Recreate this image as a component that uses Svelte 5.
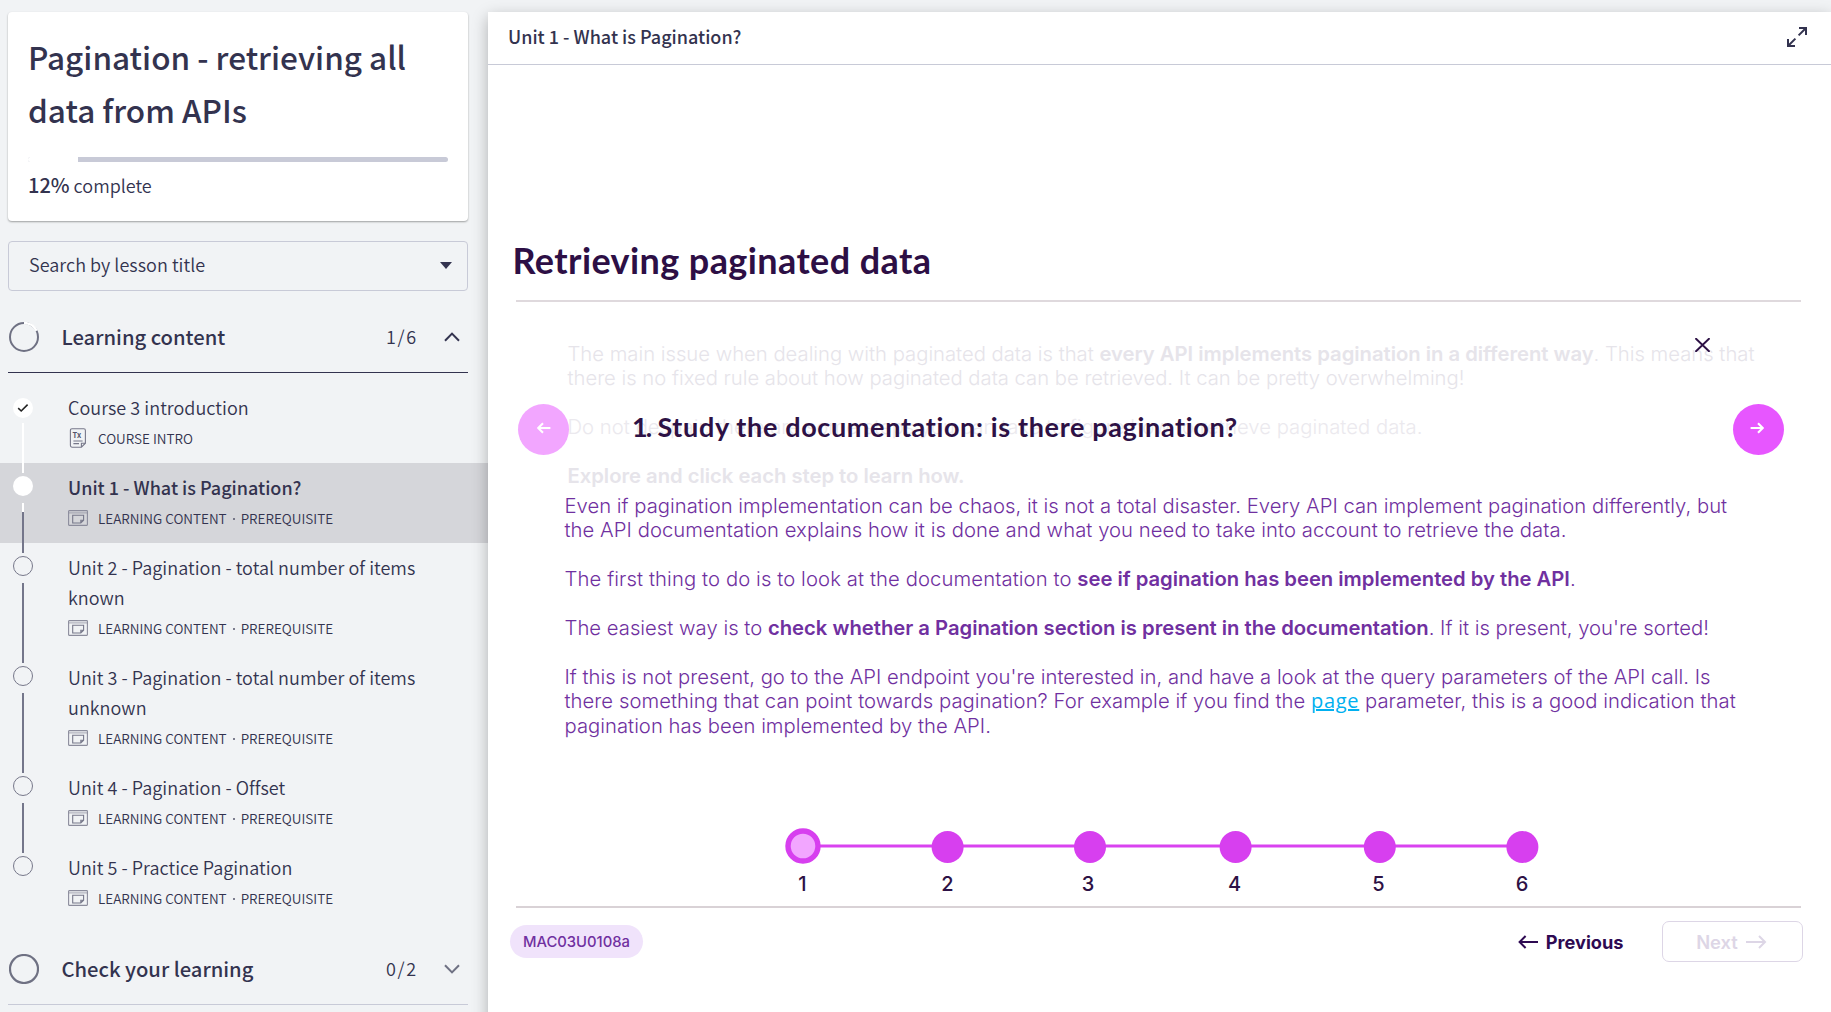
<script>
  const lessons = [
    { title: ['Course 3 introduction'], tags: ['COURSE INTRO'], icon: 'text', state: 'done' },
    { title: ['Unit 1 - What is Pagination?'], tags: ['LEARNING CONTENT', 'PREREQUISITE'], icon: 'content', state: 'current' },
    { title: ['Unit 2 - Pagination - total number of items', 'known'], tags: ['LEARNING CONTENT', 'PREREQUISITE'], icon: 'content', state: 'todo' },
    { title: ['Unit 3 - Pagination - total number of items', 'unknown'], tags: ['LEARNING CONTENT', 'PREREQUISITE'], icon: 'content', state: 'todo' },
    { title: ['Unit 4 - Pagination - Offset'], tags: ['LEARNING CONTENT', 'PREREQUISITE'], icon: 'content', state: 'todo' },
    { title: ['Unit 5 - Practice Pagination'], tags: ['LEARNING CONTENT', 'PREREQUISITE'], icon: 'content', state: 'todo' },
  ];

  const steps = [
    { n: 2, x: 167.6, label: 167.5 },
    { n: 3, x: 310, label: 308 },
    { n: 4, x: 455.6, label: 454.5 },
    { n: 5, x: 599.8, label: 598.5 },
    { n: 6, x: 742.4, label: 742 },
  ];
</script>

<div class="page">
  <aside class="sidebar">
    <section class="course">
      <h1>Pagination - retrieving all<br />data from APIs</h1>
      <div class="progress"><div class="progress-done"></div></div>
      <p class="complete"><strong>12%</strong> complete</p>
    </section>

    <div class="search">
      <span>Search by lesson title</span>
      <svg width="12" height="7" viewBox="0 0 12 7"><path d="M0 0H12L6 7Z" fill="#33334f" /></svg>
    </div>

    <header class="section open">
      <svg class="ring" width="30" height="30" viewBox="0 0 30 30" fill="none" stroke-width="2">
        <circle cx="15" cy="15" r="14" stroke="#6f7183" />
        <path d="M15 1A14 14 0 0 1 27.6 8.8" stroke="#fff" stroke-width="2.4" />
      </svg>
      <h2>Learning content</h2>
      <span class="count">1/6</span>
      <svg class="chevron" width="16" height="10" viewBox="0 0 16 10"><path d="M1 8.8L8 1.6L15 8.8" fill="none" stroke="#33334f" stroke-width="2" /></svg>
    </header>

    <ol class="lessons">
      {#each lessons as lesson}
        <li class={lesson.state}>
          <div class="rail">
            <span class="dot">
              {#if lesson.state === 'done'}
                <svg width="12" height="10" viewBox="0 0 12 10"><path d="M1.2 5.2L4.2 8L10.6 1.6" fill="none" stroke="#222" stroke-width="1.6" /></svg>
              {/if}
            </span>
            <span class="line"></span>
          </div>
          <div class="lesson">
            <h3>{#each lesson.title as part}<span>{part}</span>{/each}</h3>
            <div class="tags">
              {#if lesson.icon === 'text'}
                <svg class="kind" width="20" height="20" viewBox="0 0 20 20" fill="none" stroke="#77788a" stroke-width="1.1">
                  <path d="M4 .8H15.8Q17.4 .8 17.4 2.4V15.2L13.4 19.2H4Q2.4 19.2 2.4 17.6V2.4Q2.4 .8 4 .8Z" />
                  <path d="M13.4 19V15.2H17.2M5.4 13H14.6M5.4 15.6H11" />
                  <text x="4.6" y="10.4">Tx</text>
                </svg>
              {:else}
                <svg class="kind" width="20" height="16" viewBox="0 0 20 16" fill="none" stroke="#8b8c9c" stroke-width="1.1">
                  <rect x=".6" y=".6" width="18.8" height="14.8" rx=".6" />
                  <path d="M.6 2.9H19.4" opacity=".7" />
                  <path d="M4.7 5.2H15.6V10.2L12.8 13H4.7ZM12.8 13V10.2H15.6" stroke="#77788a" />
                </svg>
              {/if}
              <span>{lesson.tags[0]}</span>
              {#if lesson.tags[1]}<i></i><span>{lesson.tags[1]}</span>{/if}
            </div>
          </div>
        </li>
      {/each}
    </ol>

    <header class="section">
      <svg class="ring" width="30" height="30" viewBox="0 0 30 30"><circle cx="15" cy="15" r="14" fill="none" stroke="#6f7183" stroke-width="2.2" /></svg>
      <h2>Check your learning</h2>
      <span class="count">0/2</span>
      <svg class="chevron" width="16" height="10" viewBox="0 0 16 10"><path d="M1 1.2L8 8.4L15 1.2" fill="none" stroke="#6f7183" stroke-width="2" /></svg>
    </header>
  </aside>

  <main>
    <header class="bar">
      <span>Unit 1 - What is Pagination?</span>
      <svg width="20" height="20" viewBox="0 0 20 20" fill="none" stroke="#33334f" stroke-width="2">
        <path d="M12 1H19V8M19 1L11.6 8.4M8 19H1V12M1 19L8.4 11.6" />
      </svg>
    </header>

    <h2 class="heading">Retrieving paginated data</h2>
    <div class="rule"></div>

    <div class="stage">
      <div class="behind">
        <p>The main issue when dealing with paginated data is that <b>every API implements pagination in a different way</b>. This means that<br />there is no fixed rule about how paginated data can be retrieved. It can be pretty overwhelming!</p>
        <p class="faint">Do not despair, there are some steps you can take to figure how to retrieve paginated data.</p>
        <p><b>Explore and click each step to learn how.</b></p>
      </div>

      <div class="step">
        <svg class="close" width="15" height="14" viewBox="0 0 15 14"><path d="M1 .8L14 13.2M14 .8L1 13.2" stroke="#2d1145" stroke-width="1.9" stroke-linecap="round" /></svg>
        <div class="step-head">
          <button class="round prev" aria-label="Previous step">
            <svg width="14" height="12" viewBox="0 0 14 12"><path d="M13.4 6H1.4M6 1.2L1.2 6L6 10.8" /></svg>
          </button>
          <h3><span class="num">1.</span> Study the documentation: is there pagination?</h3>
          <button class="round next" aria-label="Next step">
            <svg width="14" height="12" viewBox="0 0 14 12"><path d="M.6 6H12.6M8 1.2L12.8 6L8 10.8" /></svg>
          </button>
        </div>
        <div class="text">
          <p>Even if pagination implementation can be chaos, it is not a total disaster. Every API can implement pagination differently, but<br /><span class="loose">the API documentation explains how it is done and what you need to take into account to retrieve the data.</span></p>
          <p><span class="looser">The first thing to do is to look at the documentation to</span> <b>see if pagination has been implemented by the API</b>.</p>
          <p>The easiest way is to <b>check whether a Pagination section is present in the documentation</b>. If it is present, you're sorted!</p>
          <p>If this is not present, go to the API endpoint you're interested in, and have a look at the query parameters of the API call. Is<br /><span class="loose">there something that can point towards pagination? For example if you find the <span class="link">page</span> parameter, this is a good indication that</span><br />pagination has been implemented by the API.</p>
        </div>
      </div>
    </div>

    <svg class="timeline" width="780" height="78" viewBox="0 0 780 78">
      <path d="M23 18H742" stroke="#d942f0" stroke-width="3" />
      <circle cx="23" cy="18" r="15" fill="#f2a6ff" stroke="#d73fef" stroke-width="5.4" />
      <text x="22.5" y="63">1</text>
      {#each steps as s}
        <circle cx={s.x} cy="19" r="16" fill="#d73fef" />
        <text x={s.label} y="63">{s.n}</text>
      {/each}
    </svg>

    <footer>
      <span class="code">MAC03U0108a</span>
      <span class="back">
        <svg width="20" height="14" viewBox="0 0 20 14"><path d="M20 7H1.6M7.6 1L1.6 7L7.6 13" fill="none" stroke="#2e0a52" stroke-width="2" /></svg>
        Previous
      </span>
      <button class="forward">
        Next
        <svg width="21" height="14" viewBox="0 0 21 14"><path d="M0 7H19M13 1L19 7L13 13" fill="none" stroke="#ddd6e6" stroke-width="2" /></svg>
      </button>
    </footer>
  </main>
</div>

<style>
  :global(body) { background: #f1f3f5; }
  h1, h2, h3, p, ol { margin: 0; padding: 0; font-weight: inherit; font-size: inherit; }
  svg { display: block; flex: none; }
  button { border: 0; padding: 0; margin: 0; background: none; }

  .page {
    display: flex;
    width: 100%;
    height: 1012px;
    overflow: hidden;
    font-family: 'Noto Sans CJK SC', 'Noto Sans', sans-serif;
    color: #33334f;
    white-space: nowrap;
  }

  .sidebar { width: 488px; flex: none; padding-top: 12px; box-sizing: border-box; }
  .course {
    box-sizing: border-box;
    width: 460px;
    height: 209px;
    margin-left: 8px;
    padding: 18px 20px 0;
    background: #fff;
    border-radius: 4px;
    box-shadow: 0 1px 2px rgba(0, 0, 0, .35);
  }
  h1 { font-size: 31.5px; line-height: 53px; font-weight: 500; }
  .progress { height: 5px; margin-top: 21px; background: #c8cad7; border-radius: 3px; overflow: hidden; }
  .progress-done { width: 50px; height: 5px; background: #fff; }
  .complete { margin-top: 10px; font-size: 18px; line-height: 27px; font-weight: 350; }
  .complete strong { font-size: 20px; font-weight: 500; line-height: 20px; }

  .search {
    box-sizing: border-box;
    width: 460px;
    height: 50px;
    margin: 20px 0 9px 8px;
    padding: 0 15px 0 20px;
    display: flex;
    align-items: center;
    justify-content: space-between;
    border: 1px solid #c8cad7;
    border-radius: 4px;
    font-size: 18px;
    font-weight: 350;
    letter-spacing: .03px;
  }
  .search span { line-height: 27px; padding-bottom: 3px; }
  .search svg { margin-bottom: 1px; }

  .section {
    box-sizing: border-box;
    width: 460px;
    height: 73px;
    margin-left: 8px;
    padding: 0 8px 0 1px;
    display: flex;
    align-items: center;
    border-bottom: 1px solid #c8cad7;
  }
  .section.open { border-color: #33334f; }
  .ring { margin-top: 2px; }
  .section h2 { flex: 1; margin-left: 22.5px; padding-top: 1px; font-size: 20.2px; line-height: 30px; font-weight: 500; }
  .count { width: 58px; font-size: 18px; line-height: 27px; font-weight: 350; letter-spacing: 1.6px; }
  .chevron { margin-top: 1px; }

  .lessons { list-style: none; padding: 10px 0 9px; }
  li { display: flex; }
  li.current { background: #d5d6da; }
  .rail { width: 20px; margin: 13px 35px 0 13px; display: flex; flex-direction: column; align-items: center; flex: none; }
  .dot {
    box-sizing: border-box;
    width: 20px;
    height: 20px;
    flex: none;
    border: 1px solid #77788a;
    border-radius: 50%;
    display: flex;
    align-items: center;
    justify-content: center;
  }
  .done .dot, .current .dot { border: 0; background: #fff; }
  .line { width: 2px; flex: 1; margin: 7px 0 -9.5px; background: #74768a; position: relative; }
  .done .rail { margin-top: 15px; }
  .done .line { background: #fff; margin-top: 5px; }
  .current .line { background: linear-gradient(#fff 9px, #74768a 9px); }
  li:last-child .line { display: none; }
  .lesson { padding: 9px 0 15px; }
  h3 span { display: block; }
  .lesson h3 { font-size: 18px; line-height: 30px; font-weight: 350; letter-spacing: .04px; }
  .current h3 { font-weight: 500; letter-spacing: 0; }
  .tags { display: flex; align-items: center; height: 20px; margin-top: 6px; font-size: 13.5px; line-height: 20px; font-weight: 350; }
  .kind { margin-right: 10px; }
  .kind text { font-size: 7.5px; font-weight: 700; fill: #55566b; stroke: none; }
  .tags i { width: 2px; height: 2px; margin: 2px 6px 0; background: #55566b; border-radius: 1px; }

  main {
    flex: 1;
    min-width: 0;
    height: 1100px;
    margin-top: 12px;
    background: #fff;
    box-shadow: 0 5px 15px rgba(0, 0, 0, .28);
    position: relative;
    font-family: Inter, sans-serif;
  }
  .bar {
    display: flex;
    align-items: center;
    justify-content: space-between;
    height: 52px;
    padding: 0 24px 0 20px;
    border-bottom: 1px solid #c8cad7;
    font-family: 'Noto Sans CJK SC', sans-serif;
    font-size: 18px;
    line-height: 27px;
    font-weight: 500;
  }
  .bar span { padding-bottom: 3px; }
  .bar svg { margin-bottom: 2px; }
  .heading { margin: 173px 0 0 24.5px; font: 700 36px/44px Lato, sans-serif; letter-spacing: .4px; color: #2d0f45; }
  .rule { width: 1285px; height: 2px; margin: 18px 0 0 28px; background: #dfd9dd; }

  .stage { display: grid; height: 526px; }
  .stage > * { grid-area: 1 / 1; }
  .behind { padding: 40px 0 0 79.5px; font-size: 20.25px; font-weight: 300; line-height: 24.4px; letter-spacing: -.01px; color: #e6e4ea; }
  .behind p, .text p { margin-bottom: 24.4px; }
  .behind .faint { color: #ebe9ee; letter-spacing: .03px; }
  b { font-weight: 600; letter-spacing: -.02px; }
  .step { position: relative; padding: 36px 47px 0 30px; display: flex; flex-direction: column; }
  .close { margin: 0 74px 0 auto; }
  .step-head { display: flex; align-items: center; height: 51px; margin-top: 52px; }
  .step-head h3 { flex: 1; margin: 0 0 6px 63px; font: 700 27px/32px Lato, sans-serif; letter-spacing: .65px; font-variant-ligatures: none; color: #2d1145; }
  .step-head .num { display: inline; letter-spacing: -1.9px; }
  .round { width: 51px; height: 51px; border-radius: 50%; display: flex; align-items: center; justify-content: center; padding: 0 0 3px; }
  .prev { background: #f2a6ff; }
  .next { background: #e756ff; padding-right: 3px; }
  .round path { fill: none; stroke: #fff; stroke-width: 2.1; }
  .text { margin: 39px 0 0 46.5px; font-size: 20.25px; font-weight: 300; line-height: 24.45px; letter-spacing: .015px; color: #7030a0; }
  .loose { letter-spacing: .05px; }
  .looser { letter-spacing: .1px; }
  .link { font-family: 'Open Sans', sans-serif; font-size: 20px; line-height: 20px; font-weight: 500; letter-spacing: .7px; color: #00b0f0; text-decoration: underline; }

  .timeline { margin-left: 292px; }
  .timeline text { font: 500 20px Inter, sans-serif; fill: #2d1145; text-anchor: middle; }

  footer { display: flex; align-items: center; width: 1285px; margin-left: 28px; height: 67px; border-top: 2px solid #d9d2d6; }
  .code { margin-left: -6px; width: 133px; height: 33px; border-radius: 16.5px; background: #f0e3fb; color: #7030a0; font-size: 14.8px; font-weight: 500; line-height: 34px; text-align: center; }
  .back { margin-left: auto; display: flex; align-items: center; gap: 7.5px; font-size: 18.2px; font-weight: 700; color: #2e0a52; }
  .forward { box-sizing: border-box; width: 141px; height: 41px; margin: 0 -1.5px 0 38px; display: flex; align-items: center; justify-content: center; gap: 8px; border: 1.5px solid #ddd6e6; border-radius: 7px; padding-right: 1px; font: 600 18.4px Inter, sans-serif; color: #ddd6e6; }
</style>
